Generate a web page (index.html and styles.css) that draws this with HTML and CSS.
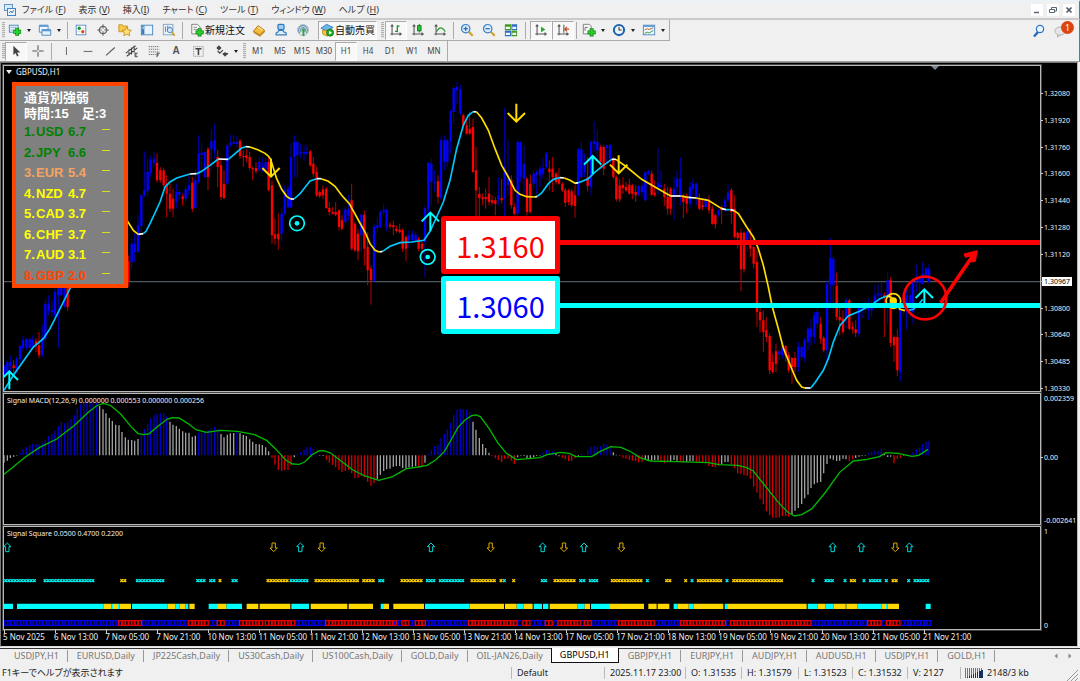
FILE: index.html
```html
<!DOCTYPE html>
<html lang="ja">
<head>
<meta charset="utf-8">
<title>GBPUSD,H1</title>
<link rel="stylesheet" href="styles.css">
</head>
<body>
<div class="app">
<header class="menubar">
  <svg class="app-icon" viewBox="0 0 12 12"><rect x=".5" y=".5" width="8" height="6" fill="#dcebf8" stroke="#5f97c9"/><rect x="3.500" y="4.500" width="8" height="7" fill="#e8f2fb" stroke="#4585bd"/><path d="M5 9l2-2 1 2 2-3" fill="none" stroke="#4585bd"/></svg>
  <nav class="menu">
    <button>ファイル (<u>F</u>)</button><button>表示 (<u>V</u>)</button><button>挿入(<u>I</u>)</button><button>チャート (<u>C</u>)</button><button>ツール (<u>T</u>)</button><button>ウィンドウ (<u>W</u>)</button><button>ヘルプ (<u>H</u>)</button>
  </nav>
  <div class="win-buttons">
    <button aria-label="最小化"><svg viewBox="0 0 12 12"><path d="M3 8.500h5" stroke="#5b6673" stroke-width="1.500"/></svg></button>
    <button aria-label="元に戻す"><svg viewBox="0 0 12 12"><path d="M4.500 5V3.500h5v3.500H8M2.500 5.500h5v3h-5z" fill="none" stroke="#5b6673"/></svg></button>
    <button aria-label="閉じる"><svg viewBox="0 0 12 12"><path d="M3.500 3.500l5 5m0-5l-5 5" stroke="#4b5663" stroke-width="1.600"/></svg></button>
  </div>
</header>

<div class="bars">
<div class="toolbar toolbar-main">
  <i class="grip"></i>
  <button class="tool drop" aria-label="新規チャート"><svg viewBox="0 0 16 16"><rect x="1.500" y="2.500" width="10" height="8" fill="#e6f1fb" stroke="#3f81bd"/><path d="M3 5h6M3 8h4" stroke="#82aed4"/><path d="M10.500 5.500v9M6 10h9" stroke="#0c7f12" stroke-width="4.400"/><path d="M10.500 6v8M6.500 10h8" stroke="#2bcf30" stroke-width="2.600"/></svg></button>
  <button class="tool drop" aria-label="表示設定"><svg viewBox="0 0 16 16"><path d="M1.500 10.500v-8h10v8z" fill="#f2f8fe" stroke="#3f81bd"/><path d="M2 3.500h9" stroke="#5b9bd5" stroke-width="2"/><path d="M4.500 14v-6.500h10V14z" fill="#e6f1fb" stroke="#3f81bd"/><path d="M5 8.500h9" stroke="#5b9bd5" stroke-width="2"/></svg></button>
  <i class="sep"></i>
  <button class="tool" aria-label="気配値"><svg viewBox="0 0 16 16"><rect x="2.500" y="2.500" width="11" height="11" fill="#fff" stroke="#4d8bc2"/><circle cx="6" cy="6" r="1.900" fill="#149a22"/><circle cx="10" cy="10" r="1.900" fill="#e24a13"/><path d="M9 6h3M4 10h3" stroke="#bcd"/></svg></button>
  <button class="tool" aria-label="データウィンドウ"><svg viewBox="0 0 16 16"><circle cx="8" cy="8" r="4.200" fill="none" stroke="#666" stroke-width="1.500"/><path d="M8 1.500v5M8 9.500v5M1.500 8h5M9.500 8h5" stroke="#666" stroke-width="1.200"/></svg></button>
  <button class="tool" aria-label="ナビゲーター"><svg viewBox="0 0 16 16"><path d="M1 2h4l1 1.500h5V10H1z" fill="#f8c94b" stroke="#c7901b"/><path d="M10 4.500l1.700 3.400 3.600.5-2.600 2.500.6 3.600-3.300-1.700-3.300 1.700.6-3.600-2.600-2.500 3.600-.5z" fill="#ffe07a" stroke="#c98e16"/></svg></button>
  <button class="tool" aria-label="ターミナル"><svg viewBox="0 0 16 16"><rect x="1.500" y="2.500" width="13" height="11" fill="#eaf3fc" stroke="#3c7fbe"/><rect x="2" y="3" width="3" height="10" fill="#3c7fbe"/><path d="M3.500 4v3" stroke="#fff"/></svg></button>
  <button class="tool" aria-label="ストラテジーテスター"><svg viewBox="0 0 16 16"><rect x="1.500" y="1.500" width="11" height="12" fill="#e8f0f8" stroke="#7aa3c9"/><path d="M4 4v6M6.500 3v7M9 4v4" stroke="#4d7fb0"/><circle cx="9" cy="8" r="3" fill="#d4e9fb" fill-opacity=".8" stroke="#3c7fbe"/><path d="M11 10.500l3.500 4" stroke="#cf9e29" stroke-width="2"/></svg></button>
  <i class="sep"></i>
  <button class="tool wide"><svg viewBox="0 0 16 16"><path d="M2 1.500h6.500l3 3v8H2z" fill="#f7f7f7" stroke="#777"/><path d="M4 5h4M4 7.500h5" stroke="#888"/><path d="M11 6v9.500M6.300 10.700h9.400" stroke="#0c7f12" stroke-width="4.400"/><path d="M11 6.700v8M7 10.700h8" stroke="#2bcf30" stroke-width="2.500"/></svg>新規注文</button>
  <button class="tool" aria-label="メタエディター"><svg viewBox="0 0 16 16"><path d="M1.500 9.500L7 3l7.500 5.500L9 13.500z" fill="#f3bd3c" stroke="#a86f11"/><path d="M2 10.500l7 4.200 5.500-5.200" fill="none" stroke="#c88c1d" stroke-width="1.600"/><path d="M7 4.500l5 3.800" stroke="#ffe28a" stroke-width="1.500"/></svg></button>
  <button class="tool" aria-label="サポート"><svg viewBox="0 0 16 16"><rect x="4.500" y="1.500" width="7" height="6" rx="1.500" fill="#9fcdf5" stroke="#2a7ac4" stroke-width="1.400"/><path d="M2.500 13.500q-1-2.500 1.800-3 .7-2.500 3.500-2 2.700-.8 3.700 1.800 3 0 2.500 3.200z" fill="#dceefb" stroke="#3d7cb8" stroke-width="1.400"/></svg></button>
  <button class="tool" aria-label="シグナル"><svg viewBox="0 0 16 16"><circle cx="8" cy="8" r="6.300" fill="#dfe7ec" stroke="#a8b6c0"/><path d="M4.500 11.500a5 5 0 117 0M6 10a2.700 2.700 0 114 0" fill="none" stroke="#6a96b4" stroke-width="1.300"/><path d="M8.500 8v7" stroke="#35a443" stroke-width="2.200"/><circle cx="8.500" cy="8" r="1.600" fill="#35a443"/></svg></button>
  <button class="tool wide pressed"><svg viewBox="0 0 16 16"><path d="M1 6l6.500-4.500L15 5l-7 4z" fill="#6cb6ea" stroke="#2e7db8"/><path d="M3 8v4.500l5 2.500 2-1V9z" fill="#f6c945" stroke="#b98818"/><circle cx="11.500" cy="11" r="4" fill="#25a82d" stroke="#0b7a15"/><path d="M10.300 8.800v4.400L13.800 11z" fill="#fff"/></svg>自動売買</button>
  <i class="grip"></i>
  <button class="tool pressed" aria-label="バーチャート"><svg viewBox="0 0 16 16"><path class="axes" d="M3.500 2v12M1.500 12.500h12M2 4l1.500-2L5 4M12 11l2 1.500-2 1.500"/><path d="M7 9.500h2.500M9.500 10.500v-8M9.500 3.500H12" fill="none" stroke="#178a1c" stroke-width="1.400"/></svg></button>
  <button class="tool" aria-label="ローソク足"><svg viewBox="0 0 16 16"><path class="axes" d="M3.500 2v12M1.500 12.500h12M2 4l1.500-2L5 4M12 11l2 1.500-2 1.500"/><path d="M9.500 1v10" stroke="#0b7a12"/><rect x="7.500" y="3" width="4" height="6" fill="#2fbd35" stroke="#0b7a12"/></svg></button>
  <button class="tool" aria-label="ラインチャート"><svg viewBox="0 0 16 16"><path class="axes" d="M3.500 2v12M1.500 12.500h12M2 4l1.500-2L5 4M12 11l2 1.500-2 1.500"/><path d="M4 10q4.500-9 10 0" fill="none" stroke="#2a9a2f" stroke-width="1.300"/></svg></button>
  <i class="sep"></i>
  <button class="tool" aria-label="拡大"><svg viewBox="0 0 16 16"><path d="M10 10l4.500 4.500" stroke="#d1a02a" stroke-width="2.600"/><circle cx="6.500" cy="6.500" r="4.800" fill="#d9ecfc" stroke="#3a80c6" stroke-width="1.400"/><path d="M6.500 4v5M4 6.500h5" stroke="#2b6fb5" stroke-width="1.400"/></svg></button>
  <button class="tool" aria-label="縮小"><svg viewBox="0 0 16 16"><path d="M10 10l4.500 4.500" stroke="#d1a02a" stroke-width="2.600"/><circle cx="6.500" cy="6.500" r="4.800" fill="#d9ecfc" stroke="#3a80c6" stroke-width="1.400"/><path d="M4 6.500h5" stroke="#2b6fb5" stroke-width="1.400"/></svg></button>
  <button class="tool" aria-label="整列"><svg viewBox="0 0 16 16"><path d="M1 1.500h7V8H1zM8.500 8.500H15V15H8.500z" fill="#3f9c22"/><path d="M8.500 1.500H15V8H8.500zM1 8.500h7V15H1z" fill="#2d6cc0"/><path d="M2 5.500h5M9.500 5.500h4.500M2 12.500h5M9.500 12.500h4.500" stroke="#f4f8fc" stroke-width="2.600"/></svg></button>
  <i class="sep sep-gap"></i>
  <button class="tool pressed" aria-label="自動スクロール"><svg viewBox="0 0 16 16"><path class="axes" d="M3.500 2v12M1.500 12.500h12M2 4l1.500-2L5 4M12 11l2 1.500-2 1.500"/><path d="M8 4v6.500l5-3.200z" fill="#2aa82f"/></svg></button>
  <button class="tool pressed" aria-label="チャートシフト"><svg viewBox="0 0 16 16"><path class="axes" d="M3.500 2v12M1.500 12.500h12M2 4l1.500-2L5 4M12 11l2 1.500-2 1.500M9 2v9"/><path d="M9.500 7H15M12.500 4.500L10 7l2.500 2.500" fill="none" stroke="#c4481f" stroke-width="1.400"/></svg></button>
  <i class="sep"></i>
  <button class="tool drop" aria-label="インディケーター"><svg viewBox="0 0 16 16"><path d="M1.500 1.500h7l2 2v9h-9z" fill="#f7f7f7" stroke="#777"/><path d="M3.500 9V5h3" fill="none" stroke="#666"/><path d="M11 6v9.500M6.300 10.700h9.400" stroke="#0c7f12" stroke-width="4.400"/><path d="M11 6.700v8M7 10.700h8" stroke="#2bcf30" stroke-width="2.500"/></svg></button>
  <button class="tool drop" aria-label="時間足"><svg viewBox="0 0 16 16"><circle cx="8" cy="8" r="5.800" fill="#eef6fd" stroke="#1d63ad" stroke-width="2.400"/><path d="M8 4.500V8h3" fill="none" stroke="#333" stroke-width="1.200"/></svg></button>
  <button class="tool drop" aria-label="定型チャート"><svg viewBox="0 0 16 16"><rect x="1.500" y="2.500" width="13" height="11" fill="#eef6fd" stroke="#4485bf"/><path d="M2 3.500h12" stroke="#5c9bd2" stroke-width="2"/><path d="M3 8l3-1.500 2 1L13 5.500" fill="none" stroke="#b85423"/><path d="M3 12l3-1.500 2 1L13 8.500" fill="none" stroke="#2a8e35"/></svg></button>
</div>
<div class="toolbar toolbar-draw">
  <i class="grip"></i>
  <button class="tool pressed" aria-label="カーソル"><svg viewBox="0 0 16 16"><path d="M5 2v10.500l2.500-2.300 1.700 4 1.800-.8-1.700-3.800H13z" fill="#444"/></svg></button>
  <button class="tool" aria-label="十字カーソル"><svg viewBox="0 0 16 16"><path d="M8 1.500v5.500M8 9v5.500M1.500 8H7M9 8h5.500" stroke="#555" stroke-width="1.200"/></svg></button>
  <i class="sep"></i>
  <button class="tool" aria-label="垂直線"><svg viewBox="0 0 16 16"><path d="M8.500 3.500v9" stroke="#555"/></svg></button>
  <button class="tool" aria-label="水平線"><svg viewBox="0 0 16 16"><path d="M3 8.500h10" stroke="#555"/></svg></button>
  <button class="tool" aria-label="トレンドライン"><svg viewBox="0 0 16 16"><path d="M3.500 13l10-9" stroke="#555" stroke-width="1.200"/></svg></button>
  <button class="tool" aria-label="チャネル"><svg viewBox="0 0 16 16"><path d="M1 10.500L12 2M2 14L14 4.500M4.500 6v7M7.500 4v8M10.500 2v8" stroke="#444" stroke-width="1.200"/><path d="M14.500 10.500h-3v4h3M11.500 12.500h2" fill="none" stroke="#333"/></svg></button>
  <button class="tool" aria-label="フィボナッチ"><svg viewBox="0 0 16 16"><path d="M2 3h12M2 6h12M2 9h12M2 12h8" stroke="#666" stroke-dasharray="1.500 .8"/><path d="M14.500 10.500h-3V15M11.500 12.500h2" fill="none" stroke="#333"/></svg></button>
  <button class="tool glyph">A</button>
  <button class="tool" aria-label="テキストラベル"><svg viewBox="0 0 16 16"><rect x="3" y="3" width="11" height="11" fill="none" stroke="#777" stroke-dasharray="1 1"/><path d="M5 5.500h7M8.500 5.500v7" stroke="#444" stroke-width="1.800"/></svg></button>
  <button class="tool drop drop-wide" aria-label="矢印"><svg viewBox="0 0 16 16"><path d="M4.500 1.500L7.500 4.500 4.500 7.500 1.500 4.500zM11.500 9l3 2.500-3 3-3-3z" fill="#444"/><path d="M3 8l2.500 2.500L9 7M9 11h6" fill="none" stroke="#444" stroke-width="1.400"/></svg></button>
  <i class="grip"></i>
  <button class="tool tf">M1</button><button class="tool tf">M5</button><button class="tool tf">M15</button><button class="tool tf">M30</button><button class="tool tf pressed">H1</button><button class="tool tf">H4</button><button class="tool tf">D1</button><button class="tool tf">W1</button><button class="tool tf">MN</button>
</div>
<div class="notices">
  <button aria-label="検索"><svg viewBox="0 0 14 14"><path d="M6 8l-4 4.500" stroke="#2268b8" stroke-width="2.400"/><circle cx="8" cy="5" r="3.600" fill="#f2f8ff" stroke="#2c76c8" stroke-width="1.300"/></svg></button>
  <button class="mail" aria-label="通知"><svg viewBox="0 0 16 16"><ellipse cx="7" cy="8" rx="6" ry="4.600" fill="#e6e6e6" stroke="#aaa"/><path d="M4 12v3l4-3" fill="#ddd" stroke="#aaa"/></svg><span class="badge">1</span></button>
</div>
</div>

<main class="chart">
  <section class="plot plot-price">
    <svg id="price" viewBox="12 12 3108 975" preserveAspectRatio="none"></svg>
    <h1 class="plot-title"><span class="tri"></span>GBPUSD,H1</h1>
    <i class="shift-mark"></i>
    <div class="strength">
      <p>通貨別強弱</p>
      <p>時間:15　足:3</p>
      <ol>
        <li class="up"><b>1.</b><b>USD</b><b>6.7</b><i></i></li>
        <li class="up"><b>2.</b><b>JPY</b><b>6.6</b><i></i></li>
        <li class="mid"><b>3.</b><b>EUR</b><b>5.4</b><i></i></li>
        <li><b>4.</b><b>NZD</b><b>4.7</b><i></i></li>
        <li><b>5.</b><b>CAD</b><b>3.7</b><i></i></li>
        <li><b>6.</b><b>CHF</b><b>3.7</b><i></i></li>
        <li><b>7.</b><b>AUD</b><b>3.1</b><i></i></li>
        <li class="down"><b>8.</b><b>GBP</b><b>2.0</b><i></i></li>
      </ol>
    </div>
    <div class="levels"><span class="level level-red">1.3160</span><span class="level level-cyan">1.3060</span></div>
  </section>
  <ul class="axis axis-price">
    <li>1.32080</li><li>1.31920</li><li>1.31760</li><li>1.31600</li><li>1.31440</li><li>1.31280</li><li>1.31120</li><li class="now"><span>1.30967</span></li><li>1.30800</li><li>1.30640</li><li>1.30485</li><li>1.30330</li>
  </ul>
  <section class="plot">
    <svg id="macd" viewBox="12 12 3108 390" preserveAspectRatio="none"></svg>
    <h2 class="plot-title">Signal MACD(12,26,9) 0.000000 0.000553 0.000000 0.000256</h2>
  </section>
  <ul class="axis axis-ends"><li>0.002359</li><li class="zero">0.00</li><li>-0.002641</li></ul>
  <section class="plot">
    <svg id="square" viewBox="12 9 3108 306" preserveAspectRatio="none"></svg>
    <h2 class="plot-title">Signal Square 0.0500 0.4700 0.2200</h2>
  </section>
  <ul class="axis axis-ends"><li>1</li><li>0</li></ul>
  <ul class="times">
    <li>5 Nov 2025</li><li>6 Nov 13:00</li><li>7 Nov 05:00</li><li>7 Nov 21:00</li><li>10 Nov 13:00</li><li>11 Nov 05:00</li><li>11 Nov 21:00</li><li>12 Nov 13:00</li><li>13 Nov 05:00</li><li>13 Nov 21:00</li><li>14 Nov 13:00</li><li>17 Nov 05:00</li><li>17 Nov 21:00</li><li>18 Nov 13:00</li><li>19 Nov 05:00</li><li>19 Nov 21:00</li><li>20 Nov 13:00</li><li>21 Nov 05:00</li><li>21 Nov 21:00</li>
  </ul>
</main>

<nav class="tabs">
  <button>USDJPY,H1</button><button>EURUSD,Daily</button><button>JP225Cash,Daily</button><button>US30Cash,Daily</button><button>US100Cash,Daily</button><button>GOLD,Daily</button><button class="before">OIL-JAN26,Daily</button><button class="active">GBPUSD,H1</button><button>GBPJPY,H1</button><button>EURJPY,H1</button><button>AUDJPY,H1</button><button>AUDUSD,H1</button><button>USDJPY,H1</button><button>GOLD,H1</button>
  <span class="scrollers"><button class="arr" aria-label="前へ"><svg viewBox="0 0 6 6"><path d="M4.500.5v5L1.500 3z" fill="#888"/></svg></button><button class="arr" aria-label="次へ"><svg viewBox="0 0 6 6"><path d="M1.500.5v5l3-2.500z" fill="#888"/></svg></button></span>
</nav>
<footer class="status">
  <span>F1キーでヘルプが表示されます</span><span>Default</span><span>2025.11.17 23:00</span><span>O: 1.31535</span><span>H: 1.31579</span><span>L: 1.31523</span><span>C: 1.31532</span><span>V: 2127</span>
  <span class="net"><svg viewBox="0 0 18 10" shape-rendering="crispEdges"><path d="M0 0h1v10h-1zM2 0h1v9h-1zM4 0h1v8h-1zM6 0h1v7h-1zM8 0h1v6h-1zM10 0h1v5h-1zM12 0h1v4h-1zM14 0h1v3h-1zM16 0h1v2h-1z" fill="#7d8226"/><path d="M2 9h1v1h-1zM4 8h1v2h-1zM6 7h1v3h-1zM8 6h1v4h-1zM10 5h1v5h-1zM12 4h1v6h-1zM14 3h2v7h-2zM16 2h2v8h-2z" fill="#15305e"/></svg>2148/3 kb</span>
  <svg class="resize" viewBox="0 0 12 12"><path d="M1 12L12 1M5 12l7-7M9 12l3-3" stroke="#999"/></svg>
</footer>
</div>
<script src="chart.js"></script>
</body>
</html>
```
FILE: styles.css
```css
* { box-sizing: border-box; }
body { margin: 0; background: #f0f0f0; color: #222; font: 9px/12px "Noto Sans", "Noto Sans CJK JP", sans-serif; }
button { margin: 0; padding: 0; border: 0; background: none; color: inherit; font: inherit; white-space: nowrap; }
ul, ol, p, h1, h2 { margin: 0; padding: 0; list-style: none; font-weight: 400; }
svg { display: block; }
.app { display: flex; flex-direction: column; min-height: 100vh; }

.menubar { display: flex; align-items: center; height: 20px; padding: 0 4px; border-top: 2px solid #edf2f7; border-bottom: 2px solid #cacaca; border-right: 1px solid #4f7e90; }
.app-icon { width: 12px; height: 12px; margin-right: 6px; }
.menu { display: flex; gap: 13px; flex: 1; font-feature-settings: "palt"; color: #333; }
.win-buttons { display: flex; gap: 4px; }
.win-buttons button { width: 12px; height: 12px; background: #fff; }
.win-buttons svg { width: 12px; height: 12px; }

.bars { display: grid; grid-template-columns: 1fr auto; border-bottom: 1px solid #a0a0a0; border-right: 1px solid #4f7e90; }
.toolbar { display: flex; align-items: center; justify-self: start; height: 21px; padding-left: 2px; border-right: 1px solid #aaa; border-bottom: 1px solid #aaa; }
.toolbar-draw { grid-column: 1; padding-right: 2px; border-bottom: 0; height: 20px; }
.grip { width: 3px; height: 16px; background: repeating-linear-gradient(#b0b0b0 0 1px, #e4e4e4 1px 2px); }
.wide + .grip { margin: 0 1px 0 4px; }
.drop-wide + .grip { margin: 0 1px 0 0; }
.sep { width: 1px; height: 17px; margin: 0 2px; background: #aaa; }
.sep-gap { margin: 0 4px 0 3px; }
.toolbar-draw .sep { margin-right: 3px; }
.tool { display: flex; align-items: center; justify-content: center; width: 22px; height: 19px; flex: none; }
.tool svg { width: 14px; height: 14px; flex: none; }
.tool.pressed { background: #f8f8f8; border: 1px solid #fff; border-top-color: #aaa; border-left-color: #aaa; }
.tool.drop { width: 30px; justify-content: flex-start; padding-left: 3px; gap: 3px; }
.tool.drop-wide { width: 34px; padding-left: 6px; }
.tool.drop::after { content: ""; border: 2px solid transparent; border-top: 3px solid #222; border-bottom: 0; margin-left: 2px; }
.tool.wide { width: auto; padding: 0 3px 0 5px; gap: 1px; color: #111; font-size: 10px; }
.tool.wide.pressed { margin-left: 4px; padding: 0 1px; gap: 1px; }
.tool.tf { font-size: 8px; color: #444; }
.tool.glyph { font-family: "Liberation Sans", sans-serif; font-weight: 700; font-size: 10px; color: #555; }
.axes { fill: none; stroke: #555; stroke-width: 1.2; }
.notices { grid-column: 2; grid-row: 1; display: flex; align-items: center; gap: 8px; padding-right: 5px; }
.notices svg { width: 14px; height: 14px; }
.mail { position: relative; width: 20px; }
.badge { position: absolute; right: 0; top: -3px; width: 13px; height: 13px; border-radius: 7px; background: #dc4412; color: #fff; font-size: 9px; line-height: 13px; text-align: center; }

.chart { flex: 1; display: grid; grid-template-columns: minmax(0, 1fr) 36px; grid-template-rows: 327fr 132fr 104fr 15px; row-gap: 1px; padding-left: 2px; margin-right: 2px; background: #000; color: #f0f0f0; border-top: 1px solid #777; border-left: 1px solid #777; border-right: 1px solid #bbb; border-bottom: 1px solid #d8d8d8; padding-top: 2px; font-size: 7px; line-height: 9px; }
.plot { position: relative; min-height: 0; border: 1px solid #b8b8b8; outline: 1px solid #444; outline-offset: 0; }
.plot > svg { width: 100%; height: 100%; position: absolute; inset: 0; }
.plot-title { position: absolute; left: 3px; top: 2px; display: flex; align-items: center; gap: 4px; font-size: 7px; line-height: 9px; }
.plot-price .plot-title { font-size: 8px; top: 1px; left: 2px; }
.tri { border: 3px solid transparent; border-top: 4px solid #eee; border-bottom: 0; }
.shift-mark { position: absolute; left: 89.5%; top: 0; border: 4px solid transparent; border-top: 4px solid #7c869a; border-bottom: 0; }
.strength { position: absolute; left: 8px; top: 16px; width: 116px; height: 206px; border: 4px solid #ff4500; background: #808080; display: flex; flex-direction: column; padding: 4px 0 0 8px; color: #fff; font: 700 13px/16px "Liberation Sans", "Noto Sans CJK JP", sans-serif; }
.strength p { font-weight: 700; white-space: nowrap; }
.strength ol { flex: 1; display: grid; grid-auto-rows: 1fr; color: #ff0; margin-bottom: -2px; }
.strength li { display: grid; grid-template-columns: 12px 32px 34px 8px; align-items: center; }
.strength li i { height: 1px; background: #dcdc20; margin-bottom: 5px; }
.strength .up { color: #008000; }
.strength .mid { color: #f4a460; }
.strength .down { color: #ff4500; }
.levels { position: absolute; left: 437px; top: 150px; display: grid; gap: 2px; }
.level { width: 119px; height: 58px; border: 5px solid #f00; border-radius: 3px; background: #fff; color: #f00; font: 29px/48px "Noto Sans CJK JP", "Liberation Sans", sans-serif; text-align: center; }
.level-cyan { border-color: #0ff; color: #00f; }

.axis { min-height: 0; min-width: 0; }
.axis li { position: relative; padding-left: 3px; white-space: nowrap; }
.axis-price { display: grid; grid-auto-rows: 1fr; align-items: center; padding-top: 15px; margin-bottom: -10px; }
.axis-price li::before, .zero::before { content: ""; position: absolute; left: 0; top: 4px; width: 2px; height: 1px; background: #ccc; }
.now span { background: #fff; color: #000; padding: 0 2px; margin-left: -2px; }
.axis-ends { display: flex; flex-direction: column; justify-content: space-between; padding-top: 1px; }
.axis-ends .zero { margin-bottom: 5px; }
.times { grid-column: 1 / -1; display: grid; grid-template-columns: repeat(19, minmax(0, 51fr)) 103fr; font-size: 8px; line-height: 12px; }
.times li { position: relative; white-space: nowrap; }
.times li::before { content: ""; position: absolute; left: 1px; top: -1px; width: 1px; height: 3px; background: #ccc; }

.tabs { display: flex; align-items: center; height: 16px; margin-top: 1px; padding-left: 5px; padding-bottom: 1px; border-top: 1px solid #333; color: #777; }
.tabs > button { padding: 0 8px 0 9px; line-height: 12px; border-right: 1px solid #999; }
.tabs > .before { border-right: 0; }
.tabs > .active { align-self: stretch; background: #fff; color: #000; border: 1px solid #111; border-top: 0; margin-top: -1px; padding: 0 8px; }
.scrollers { margin-left: auto; display: flex; gap: 8px; padding-right: 7px; }
.arr svg { width: 6px; height: 6px; }
.status { position: relative; display: grid; grid-template-columns: minmax(0, 1fr) 93px 81px 56px 57px 54px 55px 53px 120px; align-items: center; height: 17px; font-feature-settings: "palt"; }
.status span { padding-left: 5px; border-left: 1px solid #bbb; white-space: nowrap; }
.status span:first-child { border: 0; padding-left: 2px; }
.status .net { display: flex; align-items: center; gap: 4px; padding-left: 4px; }
.net svg { width: 18px; height: 10px; }
.resize { position: absolute; right: 2px; bottom: 0; width: 12px; height: 12px; }
```
FILE: chart.js
```js
const STEP = 9.57, X0 = 12;
const barX = n => X0 + STEP * n;
const add = (id, markup) => document.getElementById(id).insertAdjacentHTML('beforeend', markup);
const path = (d, color, width) => `<path d="${d}" fill="none" stroke="${color}" stroke-width="${width}"/>`;
const line = pts => 'M' + pts;

/* Candles: colour, high, body top, body bottom, low. "-" is a bar without data. */
const candles = `
b910,910,945,945 b895,900,935,940 b880,900,912,930 r895,910,918,935 b885,890,930,935 b850,852,892,905 b822,835,857,865 b828,832,857,865 b828,832,857,862 b820,835,850,858
r828,838,850,870 r810,850,880,888 b790,825,880,885 b710,725,830,858 b700,725,748,760 b715,745,750,765 b680,690,760,765 b600,680,700,857 b600,640,700,700 b600,650,735,737
r640,650,735,747 - - - - - - - - - - - - - - - - - - r580,598,660,675
b530,545,600,618 b515,545,570,600 b458,490,570,572 b395,400,492,510 b268,385,400,405 b290,330,388,402 b280,293,333,345 b268,290,303,315 r275,303,355,362 r315,325,355,362
r318,325,370,375 r340,368,395,467 r365,395,440,450 r380,410,440,465 b365,390,420,440 b385,390,398,415 r395,403,412,432 b370,382,410,420 b340,370,385,400 r345,362,440,450
b325,355,438,440 b220,275,360,365 b243,272,278,335 b268,270,345,350 r255,262,345,385 b202,238,262,330 b185,235,268,290 r265,285,315,375 r290,310,405,415 r325,365,408,412
b245,250,365,370 b218,242,250,255 b220,240,245,248 b222,240,246,255 r232,236,282,290 r265,282,286,315 r262,280,288,300 r270,285,318,325 r315,318,322,355 r300,318,328,335
b285,300,325,330 b285,310,315,330 b285,300,320,325 r285,300,385,388 r355,370,520,545 r470,517,530,548 r455,515,532,563 b440,455,515,540 b370,385,455,460 b370,380,435,438
b245,285,437,438 b220,240,285,345 b235,240,280,350 b245,270,275,290 b250,270,275,298 b248,270,275,280 r265,268,310,315 r285,305,335,345 r315,330,400,405 r385,390,402,408
r370,382,400,410 r375,380,438,440 r420,438,450,460 r435,450,455,458 r420,450,458,462 r443,445,495,505 r460,475,500,505 b435,442,480,490 b398,440,460,475 r365,415,560,565
r480,485,565,570 r500,515,568,595 b455,458,520,570 r445,458,560,610 r510,555,625,670 r610,620,655,728 b485,495,658,660 b465,490,498,508 b445,450,495,498 b425,445,450,460
b440,443,495,508 r480,488,493,500 r475,490,496,520 r490,500,507,512 r485,503,510,515 r500,505,560,570 r520,525,560,598 b505,520,535,560 b505,515,535,540 b510,518,535,540
r525,530,560,568 r540,545,560,570 b430,440,540,645 b300,302,440,460 b290,305,360,430 b325,360,362,390 r340,358,405,425 b225,235,408,412 b220,235,300,325 b230,235,300,315
b145,148,238,275 b72,78,150,185 b60,75,85,125 b68,82,155,160 r155,160,190,195 r170,190,215,218 r150,200,215,218 r170,195,330,332 r255,325,385,470 r375,395,408,470
r395,405,412,430 r380,405,412,440 r345,395,420,430 r400,415,422,430 r405,415,425,460 b345,400,412,430 r350,408,415,425 b138,315,410,470 b235,345,370,400 r340,355,430,440
r425,435,455,460 b235,240,455,470 b238,240,345,360 b250,305,350,400 r345,350,450,460 r338,365,450,455 b325,335,365,380 b325,330,340,395 b310,320,340,375 b290,318,335,350
b270,275,315,320 r295,320,330,385 r285,320,345,390 r330,335,360,368 r318,350,365,368 r360,365,385,390 r378,385,422,435 r380,385,420,430 r380,388,430,435 r370,400,432,467
b258,262,400,402 b240,262,345,350 b275,300,330,345 r285,345,372,388 b235,240,375,400 b178,238,245,270 b203,240,265,290 r248,255,300,320 r250,255,320,340 b248,250,258,300
b245,250,290,300 r285,290,345,350 r340,345,412,418 r350,370,412,420 r345,368,378,395 r360,375,385,390 r350,368,395,398 r365,370,395,412 r370,390,400,420 b370,372,398,402
b362,372,390,405 b328,330,415,418 b322,328,335,340 r325,335,398,402 r355,392,400,405 b258,362,375,400 b325,370,375,385 r365,380,405,432 r375,405,440,458 r375,380,440,458
b345,380,400,475 b325,350,375,398 b287,350,400,430 r395,400,420,468 r395,405,425,455 b360,375,425,440 b350,365,380,400 b362,365,408,430 r395,410,440,445 r410,430,435,445
b405,410,435,440 r400,418,445,455 r430,440,485,488 r455,460,487,500 b440,445,460,465 r430,435,445,487 b405,415,435,450 b368,392,415,420 r378,385,450,485 r400,440,525,530
r510,512,528,560 r500,512,622,688 r508,512,622,632 b500,508,540,570 r500,545,560,585 r550,555,605,620 r565,600,750,795 r720,750,775,812 r745,775,810,870 r765,805,825,840
r815,822,925,937 r875,900,930,935 r845,868,905,930 b860,868,878,895 b845,850,880,890 r850,852,880,900 r870,878,925,932 r885,888,915,965 r870,888,915,930 b840,855,915,930
b852,855,885,895 b828,835,888,900 b795,800,840,865 b770,800,825,850 b750,760,825,845 b735,750,785,800 r765,785,830,845 r822,828,865,870 b650,665,865,905 b528,588,668,740
b582,590,670,745 r632,672,765,775 r735,765,775,820 r745,770,810,818 b708,715,765,800 r710,715,800,805 r780,795,802,815 r775,802,812,825 b735,738,815,825 b720,735,745,768
b712,735,740,755 b710,735,745,775 b715,735,745,765 b670,700,735,740 b665,695,700,725 b660,695,700,705 r690,700,705,825 b632,655,700,785 r645,655,843,855 r820,825,850,900
r802,825,925,942 b720,745,930,958 b705,740,745,760 b670,700,745,803 b672,700,735,765 b655,660,750,787 b608,650,655,690 b645,650,662,700 b600,635,665,668 b615,620,638,655 b605,620,660,663`;

const wick = { b: '', r: '' }, body = { b: '', r: '' };
candles.trim().split(/\s+/).forEach((c, n) => {
  if (c === '-') return;
  const [hi, top, bottom, lo] = c.slice(1).split(',').map(Number);
  const x = Math.round(barX(n));
  wick[c[0]] += `M${x} ${hi}V${lo}`;
  body[c[0]] += `M${x} ${top}V${Math.max(bottom, top + 4)}`;
});
add('price', path('M12 659H3120', '#4d585e', 4)
  + path(wick.b, '#0000b8', 3) + path(wick.r, '#b80000', 3)
  + path(body.b, '#0000ff', 7) + path(body.r, '#ff0000', 7));

/* Moving average, split by trend colour. */
const C = '#00c8ff', Y = '#ffdc00', W = '#ffffff';
[
  [C, '12,985 40,940 75,890 100,855 130,830 150,800 175,750 205,690 225,650'],
  [Y, '370,460 384,480 400,505 415,517'], [W, '415,517 430,515'],
  [C, '430,515 438,508 450,485 480,420 495,375 510,360 530,348 570,336'], [W, '570,336 590,335'],
  [C, '590,335 605,328 630,310 655,291'], [W, '655,291 685,292'],
  [C, '685,292 705,275 725,258 738,254'], [W, '738,254 750,255'],
  [Y, '750,255 775,264 795,274 805,282 812,292 830,350 845,382 860,403 872,411'], [W, '872,411 882,411'],
  [C, '882,411 900,395 930,357 950,350'], [W, '950,350 963,350'],
  [Y, '963,350 985,358 1005,373 1025,400 1048,425 1070,465 1095,510 1110,545 1125,565 1138,570'], [W, '1138,570 1148,568'],
  [C, '1148,568 1170,553 1200,542 1235,540 1272,535 1290,508 1310,465 1330,420 1350,355 1370,260 1390,190 1405,160 1420,149'], [W, '1420,149 1430,150'],
  [Y, '1430,150 1445,168 1465,205 1485,260 1505,310 1525,345 1545,385 1560,397 1580,404 1605,405'], [W, '1605,405 1612,403'],
  [C, '1612,403 1625,393 1645,365 1660,352 1680,347'], [W, '1680,347 1693,348'],
  [Y, '1693,348 1710,355 1725,364'], [W, '1725,364 1735,362'],
  [C, '1735,362 1765,350 1785,330 1810,310 1835,292'], [W, '1835,292 1848,292'],
  [Y, '1848,292 1880,315 1925,352 1970,378 2012,402'], [W, '2012,402 2042,402'],
  [Y, '2042,402 2065,406'], [W, '2065,406 2088,408'],
  [Y, '2088,408 2125,415 2165,440'], [W, '2165,440 2178,443'], [C, '2178,443 2192,443'], [W, '2192,443 2202,446'],
  [Y, '2202,446 2215,455 2240,495 2260,525 2275,560 2290,610 2305,675 2317,735 2335,800 2350,858 2375,920 2390,955 2405,975 2415,978'], [W, '2415,978 2432,978'],
  [C, '2432,978 2445,962 2470,925 2485,890 2500,840 2520,790 2545,762 2580,747 2615,728 2640,710 2660,702'], [W, '2660,702 2670,704'],
  [Y, '2670,704 2685,720 2700,742 2715,746'], [C, '2725,745 2740,742 2755,728 2768,712']
].forEach(([color, pts]) => add('price', path(line(pts), color, 5)));

const up = (x, y) => path(`M${x} ${y + 58}V${y + 4}M${x - 26} ${y + 30}L${x} ${y + 4}L${x + 26} ${y + 30}`, '#00ffff', 6);
const down = (x, y) => path(`M${x} ${y - 58}V${y - 4}M${x - 26} ${y - 30}L${x} ${y - 4}L${x + 26} ${y - 30}`, '#ffdc00', 6);
const target = (x, y, color, dot) => `<circle cx="${x}" cy="${y}" r="22" fill="none" stroke="${color}" stroke-width="5"/><circle cx="${x}" cy="${y}" r="${dot}" fill="${color}"/>`;
add('price', up(28, 924) + up(1291, 448) + up(1778, 278)
  + down(813, 348) + down(1549, 183) + down(1856, 338)
  + target(891, 484, '#00ffff', 7) + target(1283, 585, '#00ffff', 7) + target(2680, 717, '#ffdc00', 11)
  + path('M1670 541.5H3120', '#ff0000', 15) + path('M1670 730.5H3120', '#00ffff', 15)
  + up(2773, 678)
  + '<circle cx="2775" cy="708" r="64" fill="none" stroke="#ff0000" stroke-width="8"/>'
  + path('M2822 722L2922 576', '#ff0000', 11)
  + '<path d="M2932 566L2892 576L2896 586L2911 582L2915 600L2926 598Z" fill="#ff0000" stroke="#ff0000" stroke-width="3"/>');

/* MACD histogram, one value per bar, measured from the zero line at 196. */
const macd = `
w218 w212 w204 w200 w197 b188 b178 b171 b166 b162 b162 b163 b160 b148 b138 b132 b122 b108 b94 b100 b96 b88 b75 b55 b42 b36 b36 b36 b36 b38
w48 w58 w70 w84 w93 w104 w106 w126 w142 w149 w150 w152 w147 b133 b117 b101 b85 b76 b71 b70 b70 b80 w95 w104 w108 w116 w124 w128 w128 w140
w137 b128 b127 b124 b120 b115 b110 b116 w132 w142 w134 w130 w129 b125 w130 w135 w138 w148 w155 w162 w163 w165 w172 w184 r204 r224 r240 r243 r240 r240
r226 w202 b192 b186 b179 b171 b171 b176 b194 w197 w198 r209 r218 r225 r232 r240 r245 r243 r240 r250 r264 r264 r258 r262 r275 r287 r280 w268 w254 w243
w238 w236 w230 w228 w228 w234 w235 w232 w230 w228 r232 r230 w218 b192 b180 b168 b165 b145 b132 b118 b98 b75 b60 b57 b57 b59 b67 w95 w119 w144
w162 w174 w188 r198 r204 r210 r216 r207 r206 r212 r222 w202 w197 w198 w204 w205 w202 w198 w197 b188 b180 b180 b184 w190 w199 r203 r208 r213 r212 r204
w198 b192 b194 b180 b171 b168 b171 b168 b161 b164 b174 w187 w194 r198 r203 r206 r210 r212 r213 r217 r215 w210 w212 w212 w210 w210 r216 r220 r217 w216
w210 w212 r214 r218 w215 w213 w213 r216 r217 r216 r220 r228 r231 r231 r227 w222 w216 w216 r222 r235 r250 r252 r256 r258 r266 r290 r308 r328 r343 r364
r376 r383 r383 r382 r378 r378 r380 w372 w362 w354 w342 w325 w314 w294 w283 w278 w276 w250 w222 w206 w209 w213 w212 w206 w208 r214 r208 w204 w200 w198
w197 b190 b186 b182 b184 b178 w190 w201 w200 r220 r208 r204 w197 w197 b194 b186 b177 b172 b162 b155 b153`;
const hist = { w: '', b: '', r: '' };
macd.trim().split(/\s+/).forEach((v, n) => { hist[v[0]] += `M${Math.round(barX(n))} 196V${v.slice(1)}`; });
add('macd', path(hist.w, '#a0a0a0', 4) + path(hist.b, '#0000c8', 4) + path(hist.r, '#d00000', 4)
  + path(line('12,253 31,238 77,200 119,172 170,147 222,107 263,68 289,48 310,40 331,46 362,72 393,110 413,130 429,134 446,132 470,112 501,88 517,83 537,84 563,100 589,120 620,127 661,121 713,124 764,134 801,152 826,176 857,210 878,222 897,223 914,216 935,195 956,183 971,182 992,189 1023,213 1059,240 1095,258 1136,271 1178,260 1219,236 1255,231 1281,226 1307,210 1333,185 1353,150 1374,112 1395,90 1415,77 1428,75 1441,80 1467,115 1493,158 1519,190 1550,209 1620,203 1641,194 1682,187 1708,190 1728,200 1775,200 1801,184 1832,170 1863,172 1894,186 1920,203 1951,213 2033,215 2126,218 2157,224 2214,226 2240,233 2260,243 2291,282 2333,335 2364,367 2384,378 2405,374 2436,356 2477,306 2519,247 2560,213 2601,208 2638,200 2658,188 2694,190 2736,199 2756,196 2784,178'), '#00b800', 4));

/* Signal Square: arrows, crosses, blocks and the chained boxes at the bottom. */
const hollow = (x, s, color) => `<path transform="translate(${x} 70) scale(1 ${s})" d="M0 -13L11 -2H5V13H-5V-2H-11Z" fill="none" stroke="${color}" stroke-width="3"/>`;
[22, 901, 1293, 1628, 1752, 2498, 2584, 2728].forEach(x => add('square', hollow(x, 1, '#00d8d8')));
[821, 965, 1472, 1692, 1864, 2686].forEach(x => add('square', hollow(x, -1, '#d8a800')));

const ranges = s => s.trim().split(/\s+/).map(r => [r[0], ...r.slice(1).split('-').map(Number)]);
const cross = { c: '', y: '' };
ranges('c12-112 c130-284 y360-380 c407-494 c588-618 c627-647 y655-667 c694-714 y799-868 c868-924 y943-1080 y1086-1125 c1134-1154 y1201-1268 c1277-1307 c1316-1393 y1411-1488 y1498-1508 c1508-1518 y1536-1546 c1622-1642 y1660-1728 c1737-1757 c1766-1795 y1832-1928 c1937-1947 y1995-2015 y2052-2062 c2071-2081 y2090-2168 c2176-2186 y2196-2349 c2434-2444 c2473-2502 c2530-2540 y2549-2569 c2587-2597 c2606-2645 c2654-2664 y2674-2693 c2721-2731 c2740-2789')
  .forEach(([k, a, b]) => { for (let x = a + 5; x < b; x += STEP) cross[k] += `M${x - 4} 166l8 8m0 -8l-8 8`; });
add('square', path(cross.c, '#00f0f0', 4) + path(cross.y, '#ffd000', 4));

const block = { c: '', y: '' };
ranges('c12-39 c51-310 y310-334 c334-339 y339-354 c354-358 y358-393 c396-502 y502-526 c526-539 y539-556 c556-565 y568-584 c626-654 y654-679 c679-726 y740-775 y779-871 c874-927 y932-1042 y1046-1119 c1142-1152 y1152-1167 y1180-1272 c1275-1409 y1409-1512 y1515-1550 c1550-1571 y1571-1598 c1601-1626 c1629-1645 y1649-1732 c1732-1754 y1754-1770 c1773-1830 y1830-1932 y1945-1970 y1973-2008 c2021-2032 y2032-2066 c2066-2080 y2080-2170 c2174-2184 y2184-2420 c2423-2452 y2452-2476 c2476-2501 y2501-2536 c2536-2539 y2539-2573 c2573-2645 y2645-2658 c2658-2662 y2662-2697 c2777-2792')
  .forEach(([k, a, b]) => { block[k] += `M${a} 247H${b}`; });
add('square', path(block.c, '#00ffff', 16) + path(block.y, '#ffd700', 16));

const box = { b: '', r: '' };
ranges('b12-355 r355-426 b426-565 r565-600 r603-627 b627-651 r651-676 b676-718 r718-789 r795-886 b886-976 r976-1183 b1183-1205 r1205-1225 b1225-1245 r1245-1275 b1275-1405 r1405-1553 b1553-1568 r1568-1593 b1593-1635 r1635-1660 b1660-1673 r1673-1740 b1740-1752 r1752-1775 b1775-1855 r1855-1965 b1965-2040 r2040-2178 b2178-2191 r2191-2435 b2435-2602 r2602-2645 b2645-2659 r2659-2703 b2703-2795')
  .forEach(([k, a, b]) => { for (let x = a + 1; x < b - 5; x += STEP) box[k] += `M${x} 290h11v14h-11z`; });
add('square', path(box.b, '#0000e6', 4) + path(box.r, '#e60000', 4));
```
